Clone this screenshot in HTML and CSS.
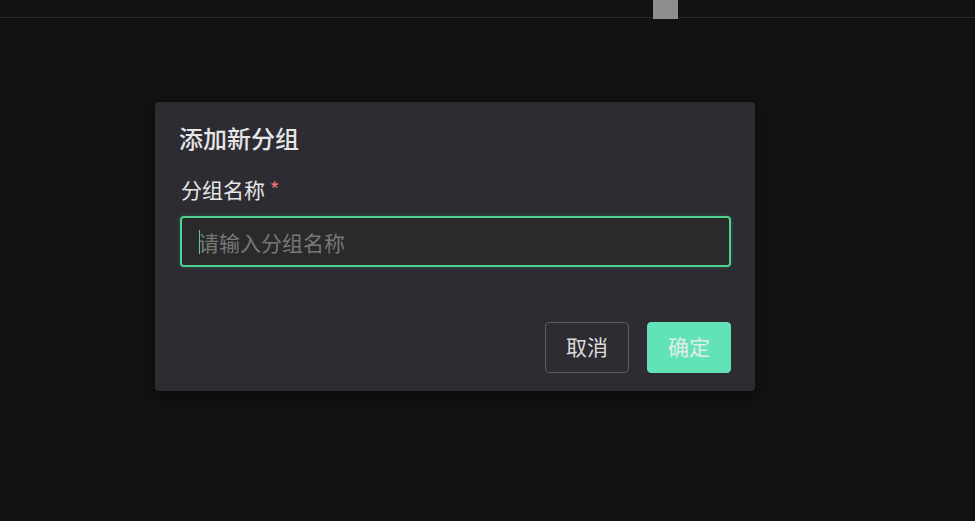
FILE: index.html
```html
<!DOCTYPE html>
<html lang="zh-CN">
<head>
<meta charset="utf-8">
<link rel="stylesheet" href="styles.css">
</head>
<body>
<div class="topbar"><div class="thumb"></div></div>
<div class="dialog">
  <div class="title">添加新分组</div>
  <div class="label">分组名称 <span class="req">*</span></div>
  <div class="input"><span class="caret"></span><span class="ph">请输入分组名称</span></div>
  <div class="footer">
    <button class="btn cancel">取消</button>
    <button class="btn ok">确定</button>
  </div>
</div>
</body>
</html>
```
FILE: styles.css
```css
html, body {
  margin: 0;
  padding: 0;
  background: #121212;
  font-family: "Noto Sans CJK SC", "Noto Sans", sans-serif;
  width: 975px;
  height: 521px;
  overflow: hidden;
}
.topbar {
  height: 17px;
  border-bottom: 1px solid #2b2b2b;
  display: flex;
  align-items: flex-start;
}
.thumb {
  margin-left: 653px;
  width: 25px;
  height: 19px;
  background: #8e8e8e;
  position: relative;
  z-index: 1;
}
.dialog {
  margin: 84px 0 0 155px;
  width: 600px;
  height: 289px;
  box-sizing: border-box;
  background: #2d2c33;
  border-radius: 4px;
  padding: 20px 24px 18px 24px;
  box-shadow: 0 4px 16px rgba(0,0,0,0.45);
  display: flex;
  flex-direction: column;
}
.title {
  font-size: 24px;
  line-height: 32px;
  color: #e6e6e6;
  font-weight: 500;
}
.label {
  margin-top: 21px;
  margin-left: 2px;
  font-size: 21px;
  line-height: 28px;
  color: #e6e6e6;
}
.req {
  color: #e57373;
}
.input {
  margin-top: 13px;
  margin-left: 1px;
  width: 551px;
  height: 51px;
  flex-shrink: 0;
  box-sizing: border-box;
  border: 2px solid #4fd391;
  border-radius: 4px;
  background: #2a2a2b;
  box-shadow: 0 0 4px rgba(79, 211, 145, 0.25);
  display: flex;
  align-items: center;
  padding-left: 16px;
  position: relative;
}
.caret {
  width: 1px;
  height: 24px;
  background: #4fd391;
  position: absolute;
  left: 17px;
  top: 12px;
}
.ph {
  font-size: 21px;
  color: #777777;
}
.footer {
  margin-top: auto;
  display: flex;
  justify-content: flex-end;
  gap: 18px;
}
.btn {
  width: 84px;
  height: 51px;
  border-radius: 4px;
  font-family: inherit;
  font-size: 21px;
  padding: 0 0 3px 0;
  cursor: pointer;
}
.cancel {
  background: transparent;
  border: 1px solid #5c5c60;
  color: #dcdcdc;
}
.ok {
  background: #62e3b7;
  border: 1px solid #62e3b7;
  color: #e4ece8;
}
```
